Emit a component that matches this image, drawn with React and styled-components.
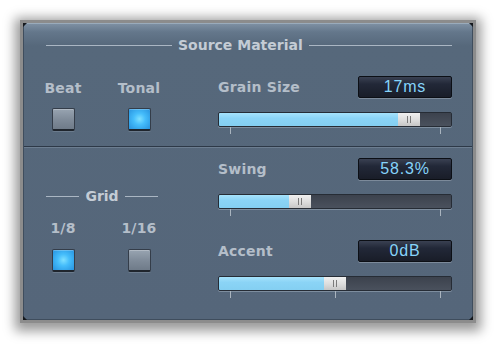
import React from 'react';
import styled, { createGlobalStyle } from 'styled-components';

const GlobalStyle = createGlobalStyle`
  html, body {
    margin: 0;
    padding: 0;
    background: #ffffff;
  }
  body {
    width: 500px;
    height: 346px;
    overflow: hidden;
  }
`

const sliders = {
    grain: { label: 'Grain Size', value: '17ms', pos: 179, ticks: 2 },
    swing: { label: 'Swing', value: '58.3%', pos: 70, ticks: 2 },
    accent: { label: 'Accent', value: '0dB', pos: 105, ticks: 3 }
}

const Check = ({ on }) => <CheckBox $on={on} />

const Slider = ({ data }) => (
    <SliderBlock>
        <ValueRow>
            <Label>{data.label}</Label>
            <ValueBox>{data.value}</ValueBox>
        </ValueRow>
        <Track>
            <Fill style={{ width: data.pos }} />
            <Thumb>
                <Grip />
                <Grip />
            </Thumb>
            <Rest />
        </Track>
        <Ticks>
            {Array.from({ length: data.ticks }).map((_, i) => <Tick key={i} />)}
        </Ticks>
    </SliderBlock>
)

const App = () => {
    return (
        <Page>
            <GlobalStyle />
            <Panel>
                <TopSection>
                    <Heading>
                        <Rule $w={126} />
                        <HeadingText>Source Material</HeadingText>
                        <Rule />
                    </Heading>
                    <Row $top={23}>
                        <LeftTop>
                            <Options>
                                <Option>
                                    <Label>Beat</Label>
                                    <Check />
                                </Option>
                                <Option>
                                    <Label>Tonal</Label>
                                    <Check on />
                                </Option>
                            </Options>
                        </LeftTop>
                        <Slider data={sliders.grain} />
                    </Row>
                </TopSection>
                <Divider />
                <BottomSection>
                    <Row>
                        <LeftBottom>
                            <SmallHeading>
                                <Rule />
                                <HeadingText>Grid</HeadingText>
                                <Rule />
                            </SmallHeading>
                            <Options>
                                <Option $gap={13}>
                                    <Label>1/8</Label>
                                    <Check on />
                                </Option>
                                <Option $gap={13}>
                                    <Label>1/16</Label>
                                    <Check />
                                </Option>
                            </Options>
                        </LeftBottom>
                        <RightStack>
                            <Slider data={sliders.swing} />
                            <Slider data={sliders.accent} />
                        </RightStack>
                    </Row>
                </BottomSection>
                <Corner $tl />
                <Corner $tr />
                <Corner $bl />
                <Corner $br />
            </Panel>
        </Page>
    );
};

export default App;

const Page = styled.div`
    box-sizing: border-box;
    width: 500px;
    height: 346px;
    padding: 23px 27px 26px 23px;
    background: #ffffff;
`

const Panel = styled.div`
    position: relative;
    box-sizing: border-box;
    width: 450px;
    height: 297px;
    display: flex;
    flex-direction: column;
    background: linear-gradient(180deg, #7d8fa2 0px, #64778b 8px, #56687b 22px, #55667a 100%);
    border: 1px solid #3f4d5d;
    border-top-color: #9aabbb;
    box-shadow: 0 0 0 3px #8c8c8c, 0 3px 11px 8px rgba(0, 0, 0, 0.4);
    font-family: "DejaVu Sans", "Liberation Sans", sans-serif;
`

const Corner = styled.div`
    position: absolute;
    width: 4px;
    height: 4px;
    background: #15181d;
    ${p => p.$tl && 'top: -1px; left: -1px; clip-path: polygon(0 0, 100% 0, 0 100%);'}
    ${p => p.$tr && 'top: -1px; right: -1px; clip-path: polygon(0 0, 100% 0, 100% 100%);'}
    ${p => p.$bl && 'bottom: -1px; left: -1px; clip-path: polygon(0 0, 0 100%, 100% 100%);'}
    ${p => p.$br && 'bottom: -1px; right: -1px; clip-path: polygon(100% 0, 100% 100%, 0 100%);'}
`

const TopSection = styled.section`
    height: 122px;
    box-sizing: border-box;
    padding: 13px 20px 0 22px;
`

const BottomSection = styled.section`
    flex: 1;
    padding: 10px 20px 0 22px;
`

const Divider = styled.div`
    height: 1px;
    background: #2d3947;
    border-bottom: 1px solid #6c7d90;
`

const Heading = styled.div`
    display: flex;
    align-items: center;
    height: 16px;
    gap: 6px;
`

const SmallHeading = styled(Heading)`
    width: 112px;
    margin-top: 30px;
`

const Rule = styled.div`
    flex: ${p => (p.$w ? `0 0 ${p.$w}px` : '1')};
    height: 1px;
    background: #aab6c3;
`

const HeadingText = styled.div`
    font-size: 14px;
    font-weight: bold;
    line-height: 16px;
    color: #c4ccd5;
    white-space: nowrap;
`

const Row = styled.div`
    display: grid;
    grid-template-columns: 116px 234px;
    column-gap: 56px;
    margin-top: ${p => (p.$top || 0)}px;
`

const LeftTop = styled.div`
    padding-top: 4px;
`

const LeftBottom = styled.div`
    display: flex;
    flex-direction: column;
    gap: 16px;
`

const Options = styled.div`
    display: grid;
    grid-template-columns: 34px 46px;
    column-gap: 36px;
`

const Option = styled.div`
    display: flex;
    flex-direction: column;
    align-items: center;
    gap: ${p => p.$gap || 12}px;
`

const Label = styled.div`
    font-size: 14px;
    font-weight: bold;
    line-height: 16px;
    color: #b4bec9;
    white-space: nowrap;
    letter-spacing: 0.2px;
`

const CheckBox = styled.div`
    box-sizing: border-box;
    width: 23px;
    height: 23px;
    border: 1px solid #343d49;
    border-bottom: 2px solid #1f252d;
    border-radius: 2px;
    background: ${p => p.$on
        ? 'radial-gradient(circle at 50% 50%, #7fe0ff 0%, #45bdfb 40%, #2792de 100%)'
        : 'linear-gradient(180deg, #98a4b1 0%, #808c9a 50%, #6f7b89 100%)'};
    box-shadow: inset 0 1px 0 rgba(255, 255, 255, 0.25), 0 1px 0 rgba(140, 155, 170, 0.4);
`

const RightStack = styled.div`
    display: flex;
    flex-direction: column;
    gap: 24px;
`

const SliderBlock = styled.div`
    display: flex;
    flex-direction: column;
`

const ValueRow = styled.div`
    display: flex;
    align-items: center;
    justify-content: space-between;
    height: 22px;
    margin-bottom: 14px;
`

const ValueBox = styled.div`
    box-sizing: border-box;
    width: 94px;
    height: 22px;
    border: 1px solid #0c0f15;
    border-radius: 2px;
    background: linear-gradient(180deg, #3a4152 0%, #222838 35%, #191d28 100%);
    box-shadow: 0 1px 0 #7c8a9a;
    color: #86d4fa;
    font-family: "Liberation Sans", Arial, sans-serif;
    font-size: 16px;
    line-height: 20px;
    letter-spacing: 0.8px;
    text-align: center;
`

const Track = styled.div`
    box-sizing: border-box;
    display: flex;
    height: 15px;
    border: 1px solid #262c35;
    border-radius: 2px;
    overflow: hidden;
    background: #464d59;
    box-shadow: 0 1px 0 #7d8d9e;
`

const Fill = styled.div`
    background: linear-gradient(180deg, #a6e2fb 0%, #8bd4f6 40%, #84cff2 100%);
`

const Thumb = styled.div`
    width: 22px;
    display: flex;
    justify-content: center;
    gap: 2px;
    background: linear-gradient(180deg, #f0f0f0 0%, #dadada 60%, #c6c6c6 100%);
`

const Grip = styled.div`
    width: 1px;
    margin: 3px 0;
    background: #7a7a7a;
`

const Rest = styled.div`
    flex: 1;
    background: linear-gradient(180deg, #3c424d 0%, #4a515d 100%);
`

const Ticks = styled.div`
    display: flex;
    justify-content: space-between;
    padding: 0 11px 0 12px;
    height: 7px;
`

const Tick = styled.div`
    width: 1px;
    height: 7px;
    background: #a9b4bf;
`
